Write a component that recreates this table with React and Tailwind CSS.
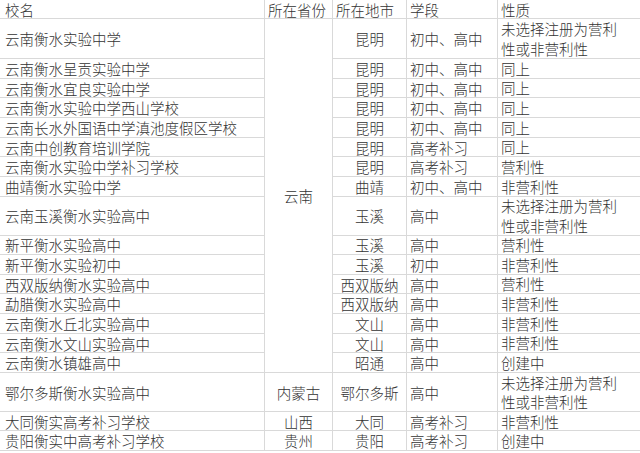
import React from "react";

const rows = [
  ["云南衡水实验中学", "昆明", "初中、高中", "未选择注册为营利\n性或非营利性"],
  ["云南衡水呈贡实验中学", "昆明", "初中、高中", "同上"],
  ["云南衡水宜良实验中学", "昆明", "初中、高中", "同上"],
  ["云南衡水实验中学西山学校", "昆明", "初中、高中", "同上"],
  ["云南长水外国语中学滇池度假区学校", "昆明", "初中、高中", "同上"],
  ["云南中创教育培训学院", "昆明", "高考补习", "同上"],
  ["云南衡水实验中学补习学校", "昆明", "高考补习", "营利性"],
  ["曲靖衡水实验中学", "曲靖", "初中、高中", "非营利性"],
  ["云南玉溪衡水实验高中", "玉溪", "高中", "未选择注册为营利\n性或非营利性"],
  ["新平衡水实验高中", "玉溪", "高中", "营利性"],
  ["新平衡水实验初中", "玉溪", "初中", "非营利性"],
  ["西双版纳衡水实验高中", "西双版纳", "高中", "营利性"],
  ["勐腊衡水实验高中", "西双版纳", "高中", "非营利性"],
  ["云南衡水丘北实验高中", "文山", "高中", "非营利性"],
  ["云南衡水文山实验高中", "文山", "高中", "非营利性"],
  ["云南衡水镇雄高中", "昭通", "高中", "创建中"],
];

const tail = [
  ["鄂尔多斯衡水实验高中", "内蒙古", "鄂尔多斯", "高中", "未选择注册为营利\n性或非营利性"],
  ["大同衡实高考补习学校", "山西", "大同", "高考补习", "非营利性"],
  ["贵阳衡实中高考补习学校", "贵州", "贵阳", "高考补习", "创建中"],
];

const cell = "border-b border-r border-[#d9d9d9] flex items-center whitespace-nowrap";
const last = "border-b border-[#d9d9d9] flex items-center whitespace-pre leading-[19.5px]";
const head = "border-b border-[#d9d9d9] flex items-center whitespace-nowrap leading-[16px] pt-[2px]";

export default function App() {
  return (
    <div
      className="w-[640px] h-[453px] bg-white text-[#333333] text-[14.5px] leading-[19px] font-light overflow-hidden"
      style={{ fontFamily: '"Noto Sans CJK SC", "Noto Sans", sans-serif' }}
    >
      <div className="grid grid-cols-[265px_68px_74px_91px_142px] grid-rows-[19px_40px_repeat(7,19.7px)_38.7px_repeat(7,19.66px)_39px_19.4px_19.4px]">
        <div className={head + " border-r pl-[5px]"}>校名</div>
        <div className={head + " border-r pl-[3px]"}>所在省份</div>
        <div className={head + " border-r pl-[3px]"}>所在地市</div>
        <div className={head + " border-r pl-[3px]"}>学段</div>
        <div className={head + " pl-[3px]"}>性质</div>

        {rows.map((r, i) => (
          <React.Fragment key={i}>
            <div className={cell + " pl-[5px]"}>{r[0]}</div>
            {i === 0 && (
              <div className={cell + " row-span-16 justify-center"}>云南</div>
            )}
            <div className={cell + " justify-center"}>{r[1]}</div>
            <div className={cell + " pl-[3px]"}>{r[2]}</div>
            <div className={last + " pl-[3px]"}>{r[3]}</div>
          </React.Fragment>
        ))}

        {tail.map((r, i) => (
          <React.Fragment key={"t" + i}>
            <div className={cell + " pl-[5px]"}>{r[0]}</div>
            <div className={cell + " justify-center"}>{r[1]}</div>
            <div className={cell + " justify-center"}>{r[2]}</div>
            <div className={cell + " pl-[3px]"}>{r[3]}</div>
            <div className={last + " pl-[3px]"}>{r[4]}</div>
          </React.Fragment>
        ))}
      </div>
    </div>
  );
}
